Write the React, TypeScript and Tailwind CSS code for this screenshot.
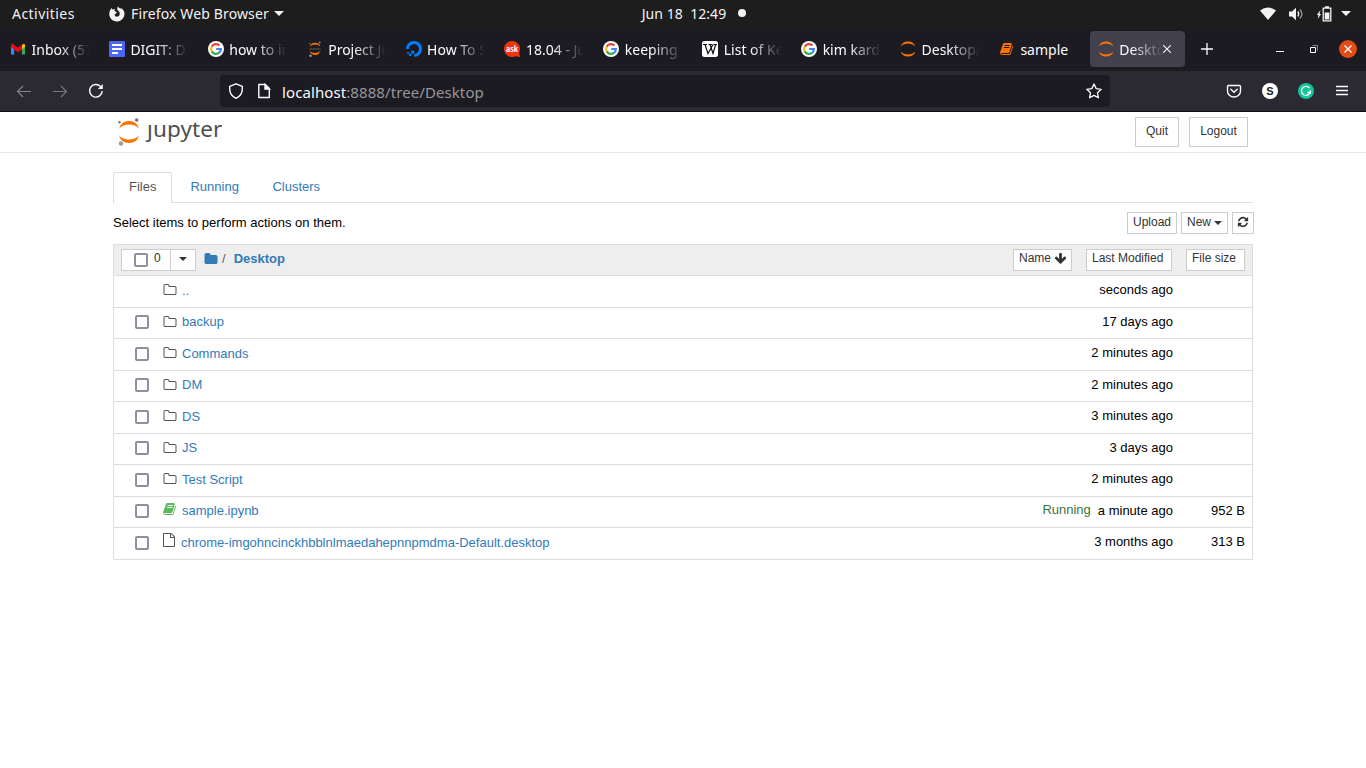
// App.tsx
import clsx from "clsx";
import { ReactNode } from "react";

type FileRow = {
  name: string;
  kind: "up" | "folder" | "notebook" | "file";
  modified: string;
  size?: string;
  running?: boolean;
};

const files: FileRow[] = [
  { name: "..", kind: "up", modified: "seconds ago" },
  { name: "backup", kind: "folder", modified: "17 days ago" },
  { name: "Commands", kind: "folder", modified: "2 minutes ago" },
  { name: "DM", kind: "folder", modified: "2 minutes ago" },
  { name: "DS", kind: "folder", modified: "3 minutes ago" },
  { name: "JS", kind: "folder", modified: "3 days ago" },
  { name: "Test Script", kind: "folder", modified: "2 minutes ago" },
  {
    name: "sample.ipynb",
    kind: "notebook",
    modified: "a minute ago",
    size: "952 B",
    running: true,
  },
  {
    name: "chrome-imgohncinckhbblnlmaedahepnnpmdma-Default.desktop",
    kind: "file",
    modified: "3 months ago",
    size: "313 B",
  },
];

const paths = {
  folder:
    "M1728 608v704q0 92-66 158t-158 66h-1216q-92 0-158-66t-66-158v-960q0-92 66-158t158-66h320q92 0 158 66t66 158v32h672q92 0 158 66t66 158z",
  folderOpen:
    "M1600 1312v-704q0-40-28-68t-68-28h-704q-40 0-68-28t-28-68v-64q0-40-28-68t-68-28h-320q-40 0-68 28t-28 68v960q0 40 28 68t68 28h1216q40 0 68-28t28-68zm128-704v704q0 92-66 158t-158 66h-1216q-92 0-158-66t-66-158v-960q0-92 66-158t158-66h320q92 0 158 66t66 158v32h672q92 0 158 66t66 158z",
  file: "M1596 380q28 28 48 76t20 88v1152q0 40-28 68t-68 28h-1344q-40 0-68-28t-28-68v-1600q0-40 28-68t68-28h896q40 0 88 20t76 48zm-444-244v376h376q-10-29-22-41l-313-313q-12-12-41-22zm384 1528v-1024h-416q-40 0-68-28t-28-68v-416h-768v1536h1280z",
  book: "M1639 478q40 57 18 129l-275 906q-19 64-76.500 107.500t-122.500 43.500h-923q-77 0-148.500-53.500t-99.500-131.500q-24-67-2-127 0-4 3-27t4-37q1-8-3-21.500t-3-19.500q2-11 8-21t16.500-23.500 16.500-23.500q23-38 45-91.500t30-91.500q3-10 .5-30t-.5-28q3-11 17-28t17-23q21-36 42-92t25-90q1-9-2.500-32t.5-28q4-13 22-30.500t22-22.500q19-26 42.500-84.500t27.500-96.500q1-8-3-25.500t-2-26.500q2-8 9-18t18-23 17-21q8-12 16.500-30.500t15-35 16-36 19.500-32 26.500-23.500 36-11.500 47.500 5.500l-1 3q38-9 51-9h761q74 0 114 56t18 130l-274 906q-36 119-71.500 153.500t-128.500 34.500h-869q-27 0-38 15-11 16-1 43 24 70 144 70h923q29 0 56-15.500t35-41.500l300-987q7-22 5-57 38 15 59 43zm-1064 2q-4 13 2 22.500t20 9.500h608q13 0 25.500-9.500t16.500-22.500l21-64q4-13-2-22.500t-20-9.500h-608q-13 0-25.500 9.500t-16.500 22.500zm-83 256q-4 13 2 22.500t20 9.500h608q13 0 25.500-9.500t16.500-22.500l21-64q4-13-2-22.500t-20-9.500h-608q-13 0-25.500 9.500t-16.500 22.500z",
  refresh:
    "M1639 1056q0 5-1 7-64 268-268 434.500t-478 166.500q-146 0-282.500-55t-243.500-157l-129 129q-19 19-45 19t-45-19-19-45v-448q0-26 19-45t45-19h448q26 0 45 19t19 45-19 45l-137 137q71 66 161 102t187 36q134 0 250-65t186-179q11-17 53-117 8-23 30-23h192q13 0 22.500 9.500t9.500 22.500zm25-800v448q0 26-19 45t-45 19h-448q-26 0-45-19t-19-45 19-45l138-138q-148-137-349-137-134 0-250 65t-186 179q-11 17-53 117-8 23-30 23h-199q-13 0-22.500-9.500t-9.500-22.500v-7q65-268 270-434.500t480-166.500q146 0 284 55.500t245 156.500l130-129q19-19 45-19t45 19 19 45z",
  arrowDown:
    "M1675 832q0 53-37 90l-651 652q-39 37-91 37-53 0-90-37l-651-652q-38-36-38-90 0-53 38-91l74-75q39-37 91-37 53 0 90 37l294 294v-704q0-52 38-90t90-38h128q52 0 90 38t38 90v704l294-294q37-37 90-37 52 0 91 37l75 75q37 39 37 91z",
};

function Icon({ d, className }: { d: string; className?: string }) {
  return (
    <svg
      viewBox="0 0 1792 1792"
      fill="currentColor"
      className={clsx("shrink-0", className)}
    >
      <path d={d} />
    </svg>
  );
}

function Caret({ className }: { className?: string }) {
  return (
    <svg viewBox="0 0 8 4" className={clsx("shrink-0", className)}>
      <path d="M0 0h8L4 4z" fill="currentColor" />
    </svg>
  );
}

/* favicons */

function GmailIcon() {
  return (
    <svg viewBox="0 0 16 16" className="size-4 shrink-0">
      <path d="M1 4v9.500h3.200V7z" fill="#4285f4" />
      <path d="M15 4v9.500h-3.200V7z" fill="#34a853" />
      <path d="M11.800 4.200 13.500 2.800q1.500-.5 1.500 1.700V6l-3.200 2.400z" fill="#fbbc04" />
      <path d="M1 4.500Q1 2 2.800 2.800L8 6.800l3.800-3v4.600L8 11.300 1 6z" fill="#ea0a17" />
    </svg>
  );
}

function DocsIcon() {
  return (
    <svg viewBox="0 0 16 16" className="size-4 shrink-0">
      <rect width="16" height="16" rx="1" fill="#4d66f5" />
      <path d="M3 4h10M3 8h10M3 12h6" stroke="#fff" strokeWidth="2" />
    </svg>
  );
}

function GoogleIcon() {
  return (
    <svg viewBox="0 0 16 16" className="size-4 shrink-0">
      <circle cx="8" cy="8" r="8" fill="#fff" />
      <g fill="none" strokeWidth="2.200">
        <path d="M11.500 4.600A4.900 4.900 0 0 0 3.700 5.700" stroke="#ea4335" />
        <path d="M3.700 5.700a4.900 4.900 0 0 0 0 4.700" stroke="#fbbc05" />
        <path d="M3.700 10.400a4.900 4.900 0 0 0 7.500 1.300" stroke="#34a853" />
        <path d="M11.200 11.700A4.900 4.900 0 0 0 12.900 8H8.200" stroke="#4285f4" />
      </g>
    </svg>
  );
}

function JupyterDotsIcon() {
  return (
    <svg viewBox="0 0 16 16" className="size-4 shrink-0">
      <path d="M2.700 5.400Q4 1.800 8 1.700t5.300 3.700Q11.300 3.500 8 3.500T2.700 5.400zM2.700 10.300Q4 13.800 8 13.900t5.300-3.600Q11.300 12 8 12t-5.300-1.700z" fill="#ff7200" />
      <path d="M2.500 8h11" stroke="#4a4743" strokeWidth="1.800" strokeDasharray="1.200 .5" />
      <circle cx="12.700" cy="1.400" r="1" fill="#8a8a8b" />
      <circle cx="2.800" cy="2.300" r=".7" fill="#767677" />
      <circle cx="3.500" cy="14.700" r="1.200" fill="#9e9e9e" />
    </svg>
  );
}

function JupyterIcon() {
  return (
    <svg viewBox="0 0 16 16" className="size-4 shrink-0">
      <path d="M.6 5.200Q2.600.5 8 .4t7.400 4.800Q12.500 2.600 8 2.600T.6 5.200z" fill="#ff7200" />
      <path d="M.6 10.800q2 4.700 7.400 4.800t7.400-4.800q-2.900 2.600-7.400 2.600T.6 10.800z" fill="#ff7200" />
    </svg>
  );
}

function DigitalOceanIcon() {
  return (
    <svg viewBox="0 0 16 16" className="size-4 shrink-0">
      <path d="M1.500 8a6.500 6.500 0 1 1 6.700 6.500" fill="none" stroke="#0080ff" strokeWidth="3" />
      <path d="M5.200 9.800h3v3h-3zM3 12.800h2.200V15H3zM1.200 11H3v1.800H1.200z" fill="#0080ff" />
    </svg>
  );
}

function AskIcon() {
  return (
    <svg viewBox="0 0 16 16" className="size-4 shrink-0">
      <path d="M8 0a8 8 0 1 0 3.500 15.200L16 16l-.8-4.500A8 8 0 0 0 8 0z" fill="#ef3410" />
      <text
        x="8"
        y="10.800"
        textAnchor="middle"
        textLength="12"
        lengthAdjust="spacingAndGlyphs"
        fontSize="8"
        fontWeight="700"
        fill="#fff"
        fontFamily="Noto Sans"
      >
        ask
      </text>
    </svg>
  );
}

function WikipediaIcon() {
  return (
    <svg viewBox="0 0 16 16" className="size-4 shrink-0">
      <rect width="16" height="16" rx="2.500" fill="#fff" />
      <path
        d="M1 3.500h4M6.500 3.500h3.500M11.500 3.500H15M3 3.500l3 9 5-9M8 3.500l3 9 2.700-9"
        fill="none"
        stroke="#111"
        strokeWidth="1.200"
      />
    </svg>
  );
}

function BookIcon() {
  return <Icon d={paths.book} className="mx-px size-[14px] text-[#ff7200]" />;
}

const browserTabs: { title: string; icon: ReactNode }[] = [
  { title: "Inbox (57)", icon: <GmailIcon /> },
  { title: "DIGIT: Data", icon: <DocsIcon /> },
  { title: "how to inst", icon: <GoogleIcon /> },
  { title: "Project Jup", icon: <JupyterDotsIcon /> },
  { title: "How To Set", icon: <DigitalOceanIcon /> },
  { title: "18.04 - Jup", icon: <AskIcon /> },
  { title: "keeping", icon: <GoogleIcon /> },
  { title: "List of Kee", icon: <WikipediaIcon /> },
  { title: "kim karda", icon: <GoogleIcon /> },
  { title: "Desktop/", icon: <JupyterIcon /> },
  { title: "sample", icon: <BookIcon /> },
  { title: "Desktop/", icon: <JupyterIcon /> },
];

function SystemBar() {
  return (
    <div className="grid h-[27px] grid-cols-3 items-center bg-[#1d1d1d] text-[14px] text-[#f2f2f2]">
      <div className="flex items-center pl-3">
        <span className="w-[97px] tracking-[0.45px]">Activities</span>
        <svg viewBox="0 0 16 16" className="size-4 shrink-0">
          <path
            d="M1 4.500 2.500 2l1 1.500L6 3l-.5 2L8 6.300 6.700 7.800 5.500 8.500Q6 10.800 8.200 10.700 11 10.300 10.800 7.500 10.500 5.300 8.500 4q-.8-2 .7-3.800.2 1.800 2 2.400L13 2.500l2 2.800A7.600 7.600 0 1 1 .5 6z"
            fill="#f2f2f2"
          />
        </svg>
        <span className="ml-[6px] whitespace-nowrap tracking-[0.13px]">
          Firefox Web Browser
        </span>
        <Caret className="ml-[5px] h-[5px] w-[10px]" />
      </div>
      <div className="flex items-center justify-center pb-px pl-[22px]">
        <span className="whitespace-pre tracking-[0.05px]">Jun 18  12:49</span>
        <span className="ml-3 size-2 rounded-full bg-[#f2f2f2]" />
      </div>
      <div className="flex items-center justify-end pr-[15px]">
        <svg viewBox="0 0 16 13" className="h-[13px] w-4">
          <path d="M0 3.500Q8-2.500 16 3.500L8 13z" fill="#f2f2f2" />
        </svg>
        <svg viewBox="0 0 16 14" className="ml-3 h-[14px] w-4">
          <path d="M1 4.500h3L8 .8v12.400L4 9.500H1z" fill="#f2f2f2" />
          <path d="M9.800 4.500q1.800 2.500 0 5" stroke="#f2f2f2" strokeWidth="1.300" fill="none" />
          <path d="M12 2.500q3.800 4.500 0 9" stroke="#999" strokeWidth="1.300" fill="none" />
        </svg>
        <svg viewBox="0 0 16 16" className="ml-3 size-4">
          <path d="M4.500 4 .8 9h1.700l-.7 4L5 8H3.500z" fill="#f2f2f2" />
          <path d="M7.200 2.200h7.600v12.600H7.200zM9 1h4" stroke="#f2f2f2" strokeWidth="1.300" fill="none" />
          <path d="M8.700 6.500h4.700v7H8.700z" fill="#f2f2f2" />
        </svg>
        <Caret className="ml-[9px] h-[5px] w-[10px]" />
      </div>
    </div>
  );
}

function TabStrip() {
  return (
    <div className="flex h-[44px] items-center bg-[#1c1b22] text-[14px] text-[#fbfbfe]">
      {browserTabs.map((tab, i) => {
        const active = i === browserTabs.length - 1;
        return (
          <div key={i} className="w-[98.9px] shrink-0 px-[2px]">
            <div
              className={clsx(
                "flex h-9 items-center rounded pl-2",
                active && "bg-[#42414d]"
              )}
            >
              {tab.icon}
              <span
                className={clsx(
                  "ml-[5.500px] overflow-hidden whitespace-nowrap",
                  active ? "w-[44px]" : "w-[58px]",
                  tab.title !== "sample" &&
                    "[mask-image:linear-gradient(to_left,transparent,black_32px)]"
                )}
              >
                {tab.title}
              </span>
              {active && (
                <svg viewBox="0 0 8 8" className="size-2 shrink-0">
                  <path d="m0 0 8 8M8 0 0 8" stroke="#fbfbfe" strokeWidth="1.100" />
                </svg>
              )}
            </div>
          </div>
        );
      })}
      <svg viewBox="0 0 12 12" className="ml-[14px] size-3 shrink-0">
        <path d="M6 0v12M0 6h12" stroke="#fbfbfe" strokeWidth="1.300" />
      </svg>
      <div className="ml-auto flex items-center pr-[9px]">
        <span className="mt-1 h-px w-2 bg-white" />
        <svg viewBox="0 0 8 8" className="ml-[26px] size-2">
          <path d="M.5 2.500h5v5h-5z" stroke="#fff" fill="none" />
          <path d="M2.500.5h5v5" stroke="#888" fill="none" />
        </svg>
        <svg viewBox="0 0 18 18" className="ml-[21px] size-[18px]">
          <circle cx="9" cy="9" r="9" fill="#e24c17" />
          <path d="m5.500 5.500 7 7m0-7-7 7" stroke="#fff" strokeWidth="1.300" />
        </svg>
      </div>
    </div>
  );
}

function Toolbar() {
  return (
    <div className="flex h-[41px] items-center border-b border-[#0c0c0d] bg-[#2b2a33] text-[#fbfbfe]">
      <svg viewBox="0 0 16 16" fill="none" className="ml-4 size-4 text-[#85848b]" stroke="currentColor" strokeWidth="1.200">
        <path d="M15 8.500H1.500M7 3 1.500 8.500 7 14" />
      </svg>
      <svg viewBox="0 0 16 16" fill="none" className="ml-5 size-4 text-[#77767d]" stroke="currentColor" strokeWidth="1.200">
        <path d="M1 8.500h13.500M9 3l5.500 5.500L9 14" />
      </svg>
      <svg viewBox="0 0 16 16" fill="none" className="ml-5 size-4" stroke="currentColor" strokeWidth="1.400">
        <path d="M12.500 3.500A6.300 6.300 0 1 0 14.200 8" />
        <path d="M14.800 1v5H9.800z" fill="currentColor" stroke="none" />
      </svg>
      <div className="ml-[116px] flex h-8 w-[890px] items-center rounded bg-[#1c1b22] px-2">
        <svg viewBox="0 0 16 16" fill="none" className="size-4" stroke="currentColor" strokeWidth="1.400">
          <path d="m8 .8 6.300 2.500v2.500C14.300 11 11.500 13.800 8 15.300 4.500 13.800 1.700 11 1.700 5.800V3.300z" strokeLinejoin="round" />
        </svg>
        <svg viewBox="0 0 16 16" fill="none" className="ml-3 size-4" stroke="currentColor" strokeWidth="1.400">
          <path d="M2.800 1.500h6.500l4 4v9H2.800z" strokeLinejoin="round" />
          <path d="M9 1.500V6h4.500z" fill="currentColor" />
        </svg>
        <span className="mt-[2px] ml-[10px] text-[15px] tracking-[0.09px] text-[#97969c]">
          <span className="text-[#fbfbfe]">localhost</span>:8888/tree/Desktop
        </span>
        <svg viewBox="0 0 16 16" fill="none" className="ml-auto size-4" stroke="currentColor" strokeWidth="1.300">
          <path d="m8 1 2.200 4.600 5 .7-3.700 3.500.9 5L8 12.400l-4.400 2.400.9-5L.8 6.300l5-.7z" strokeLinejoin="round" />
        </svg>
      </div>
      <div className="ml-auto flex items-center gap-5 pr-4">
        <svg viewBox="0 0 16 16" fill="none" className="size-4" stroke="currentColor" strokeWidth="1.400">
          <path d="M2.500 2.500h11q1 0 1 1V8a6.500 6 0 0 1-13 0V3.500q0-1 1-1z" />
          <path d="m4.800 6.300 3.200 3 3.200-3" strokeLinecap="round" />
        </svg>
        <span className="flex size-4 items-center justify-center rounded-full bg-white font-['Liberation_Sans'] text-[11px] font-bold text-[#1c1b22]">
          S
        </span>
        <svg viewBox="0 0 16 16" className="size-4">
          <circle cx="8" cy="8" r="8" fill="#15c39a" />
          <path d="M11.500 5A4.500 4.500 0 1 0 12.200 9.500H9.200M12.300 7.500v3.200" stroke="#fff" strokeWidth="1.300" fill="none" />
        </svg>
        <svg viewBox="0 0 16 16" className="size-4">
          <path d="M2 3.500h12M2 7.500h12M2 11.500h12" stroke="#fbfbfe" strokeWidth="1.300" />
        </svg>
      </div>
    </div>
  );
}

function Button({ children, className }: { children: ReactNode; className?: string }) {
  return (
    <button
      className={clsx(
        "flex items-center border border-[#ccc] bg-white px-[5px] text-[12px] leading-[17px] text-[#333]",
        className
      )}
    >
      {children}
    </button>
  );
}

function Checkbox({ className }: { className?: string }) {
  return (
    <span
      className={clsx(
        "size-[14px] shrink-0 rounded-[2px] border-2 border-[#8f8f9d] bg-white",
        className
      )}
    />
  );
}

function Header() {
  return (
    <div className="flex h-[41px] items-start border-b border-[#e7e7e7] pr-[118px] pl-[117px]">
      <svg viewBox="0 0 24 30" className="mt-[5px] h-[30px] w-6">
        <path d="M2 11.700Q4 4 12 3.900t10 7.800Q18.500 7.400 12 7.400T2 11.700z" fill="#ff7200" />
        <path d="M2 18.300Q4 26 12 26.100t10-7.800Q18.500 22.600 12 22.600T2 18.300z" fill="#ff7200" />
        <circle cx="19.700" cy="3" r="1.800" fill="#767677" />
        <circle cx="2.500" cy="5.200" r="1.200" fill="#767677" />
        <circle cx="4" cy="26.500" r="2.200" fill="#9e9e9e" />
      </svg>
      <span className="mt-[2px] ml-[6px] font-['Noto_Sans'] text-[22.500px] leading-[30px] tracking-[0.1px] text-[#4e4e4e]">
        ȷupyter
      </span>
      <Button className="mt-[5px] ml-auto h-[30px] w-[44px] justify-center pb-px">Quit</Button>
      <Button className="mt-[5px] ml-[10px] h-[30px] w-[59px] justify-center pb-px">
        Logout
      </Button>
    </div>
  );
}

function FileItem({ file, index }: { file: FileRow; index: number }) {
  // rows are 31.5px high, so every other one is a pixel taller
  const tall = index % 2 === 0;
  return (
    <div
      className={clsx(
        "flex items-start border-b border-[#ddd] pr-[7px] pl-[21px] leading-[17px]",
        tall ? "h-8" : "h-[31px]"
      )}
    >
      <Checkbox
        className={clsx(tall ? "mt-2" : "mt-[7px]", file.kind === "up" && "invisible")}
      />
      {file.kind === "notebook" && (
        <Icon d={paths.book} className="mt-[5px] ml-[14px] size-[14px] text-[#5cb85c]" />
      )}
      {file.kind === "file" && (
        <Icon d={paths.file} className="mt-[5px] ml-[13px] size-[14px] text-[#555]" />
      )}
      {(file.kind === "up" || file.kind === "folder") && (
        <Icon
          d={paths.folderOpen}
          className="mt-[7px] ml-[13.500px] mr-[.5px] size-[14px] text-[#555]"
        />
      )}
      <a className={clsx("ml-[5px] text-[#337ab7]", tall ? "mt-[6px]" : "mt-[5px]")}>
        {file.name}
      </a>
      {file.running && <span className="mt-[4px] ml-auto text-[#3c763d]">Running</span>}
      <span className={clsx("mt-[5px]", file.running ? "ml-[7px]" : "ml-auto")}>
        {file.modified}
      </span>
      <span className="mt-[5px] w-[72px] text-right">{file.size}</span>
    </div>
  );
}

function FileList() {
  return (
    <div className="mt-[10px] rounded-[1px] border border-b-0 border-[#ddd]">
      <div className="flex h-[31px] items-start border-b border-[#ddd] bg-[#eee] pr-[7px] pl-[7px]">
        <div className="mt-1 flex">
          <Button className="h-[22px] w-[50px] pb-[3px]">
            <Checkbox className="mt-[3px] ml-[7px]" />
            <span className="ml-[6px]">0</span>
          </Button>
          <Button className="-ml-px h-[22px] w-[26px] justify-center pb-[3px]">
            <Caret className="mt-px h-1 w-2" />
          </Button>
        </div>
        <Icon d={paths.folder} className="mt-[7px] ml-2 size-[14px] text-[#337ab7]" />
        <span className="mt-[5px] ml-[4px] leading-[17px] text-[#5e5e5e]">/</span>
        <a className="mt-[5px] ml-[8px] font-bold leading-[17px] text-[#337ab7]">Desktop</a>
        <Button className="mt-1 ml-auto h-[22px] w-[59px] pb-[3px]">
          Name
          <Icon d={paths.arrowDown} className="-mt-px ml-[3px] size-[13px]" />
        </Button>
        <Button className="mt-1 ml-[14px] h-[22px] w-[86px] pb-[3px]">Last Modified</Button>
        <Button className="mt-1 ml-[14px] h-[22px] w-[59px] pb-[3px]">File size</Button>
      </div>
      {files.map((file, i) => (
        <FileItem key={file.name} file={file} index={i} />
      ))}
    </div>
  );
}

function App() {
  return (
    <div className="min-h-screen bg-white">
      <div className="font-['Noto_Sans',sans-serif]">
        <SystemBar />
        <TabStrip />
        <Toolbar />
      </div>
      <div className="font-['Liberation_Sans',Arial,sans-serif] text-[13px] text-black">
        <Header />
        <div className="mx-[113px]">
          <div className="mt-[19px] flex h-[31px] border-b border-[#ddd] leading-[17px] text-[#337ab7]">
            <div className="h-[31px] rounded-t-[2px] border border-b-0 border-[#ddd] bg-white px-[15px] pt-[5px] text-[#555]">
              Files
            </div>
            <div className="ml-[2px] px-4 pt-[6px]">Running</div>
            <div className="ml-[1.500px] px-4 pt-[6px]">Clusters</div>
          </div>
          <div className="-mr-px flex h-[31px] items-start pt-[9px]">
            <span className="mt-[2px] leading-[17px]">
              Select items to perform actions on them.
            </span>
            <Button className="ml-auto h-[22px] w-[50px] pb-px">Upload</Button>
            <Button className="ml-1 h-[22px] w-[47px] pb-px">
              New
              <Caret className="ml-[3px] h-1 w-2" />
            </Button>
            <Button className="ml-1 h-[22px] w-[22px] justify-center pb-[2px]">
              <Icon d={paths.refresh} className="size-3" />
            </Button>
          </div>
          <FileList />
        </div>
      </div>
    </div>
  );
}

export default App;
